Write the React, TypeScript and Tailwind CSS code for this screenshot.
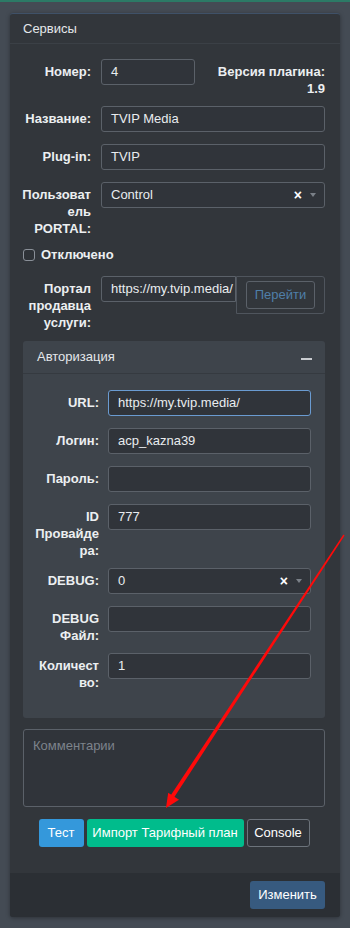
import React from 'react';

const font = { fontFamily: '"Liberation Sans", Arial, sans-serif' };

const inputCls =
  'h-[26px] w-full rounded-[3px] border border-[#5b6169] bg-[#30343a] px-[9px] text-[13px] text-[#e9ecef] outline-none';

const Row: React.FC<{ label: string; narrow?: boolean; mb?: string; children: React.ReactNode }> = ({
  label,
  narrow,
  mb = 'mb-[9px]',
  children,
}) => (
  <div className={`${mb} flex items-start`}>
    <div
      className={`${narrow ? '-ml-[4px] w-[67px] mr-[9px]' : '-ml-[4px] w-[72px] mr-[10px]'} shrink-0 break-words pt-[4px] text-right text-[13px] font-bold leading-[17px] text-[#eceff1]`}
    >
      {label}
    </div>
    <div className="min-h-[29px] min-w-0 flex-1">{children}</div>
  </div>
);

const Field: React.FC<{ value?: string; focus?: boolean }> = ({ value = '', focus }) => (
  <div className={`${inputCls} flex items-center ${focus ? 'border-[#6a9bd1]' : ''}`}>{value}</div>
);

const SelectBox: React.FC<{ value: string }> = ({ value }) => (
  <div className={`${inputCls} flex items-center`}>
    <span className="flex-1">{value}</span>
    <span className="mr-[8px] text-[14px] font-bold leading-none text-white">×</span>
    <span className="-mr-[1px] h-0 w-0 border-l-[3px] border-r-[3px] border-t-[4px] border-l-transparent border-r-transparent border-t-[#7a8088]" />
  </div>
);

const Arrow: React.FC = () => (
  <svg className="pointer-events-none absolute left-0 top-0" width="350" height="928" viewBox="0 0 350 928">
    <polygon points="344.6,535.4 343.4,534.6 170.3,795.9 173.7,798.1" fill="#ff0a0a" />
    <polygon points="166,808 168.2,792.8 179,799.8" fill="#ff0a0a" />
  </svg>
);

export default function App() {
  return (
    <div className="relative min-h-[928px] w-[350px] bg-[#444b54]" style={font}>
      <div className="h-[2px] bg-[#2c7a66]" />
      <div className="px-[10px] pt-[11px]">
        <div className="overflow-hidden rounded-[3px] border-t border-[#3f5168] bg-[#32363b] shadow-[0_1px_4px_rgba(0,0,0,0.35)]">
          <div className="flex h-[30px] items-center border-b border-[#3b4046] px-[13px] text-[13px] text-[#e4e7ea]">
            Сервисы
          </div>

          <div className="pb-[26px] pl-[13px] pr-[15px] pt-[15px]">
            <div className="mb-[9px] flex items-start">
              <div className="-ml-[4px] mr-[10px] w-[72px] shrink-0 pt-[4px] text-right text-[13px] font-bold leading-[17px] text-[#eceff1]">
                Номер:
              </div>
              <div className="w-[94px]">
                <Field value="4" />
              </div>
              <div className="flex-1 pt-[4px] text-right text-[13px] font-bold leading-[17px] text-[#eceff1]">
                Версия плагина:
                <br />
                1.9
              </div>
            </div>

            <Row label="Название:">
              <Field value="TVIP Media" />
            </Row>
            <Row label="Plug-in:">
              <Field value="TVIP" />
            </Row>
            <Row label="Пользователь PORTAL:">
              <SelectBox value="Control" />
            </Row>

            <label className="mb-[13px] flex h-[17px] items-center text-[13px] font-bold text-[#eceff1]">
              <span className="mr-[6px] h-[12px] w-[12px] rounded-[3px] border border-[#8a9098] bg-[#2e3237]" />
              Отключено
            </label>

            <Row label="Портал продавца услуги:" mb="mb-[10px]">
              <div className="flex items-start">
                <div className={`${inputCls} flex min-w-0 flex-1 items-center overflow-hidden whitespace-nowrap rounded-r-none`}>
                  https://my.tvip.media/
                </div>
                <div className="flex h-[38px] w-[89px] shrink-0 items-center justify-center rounded-r-[3px] border border-[#4f555d]">
                  <div className="flex h-[28px] w-[69px] items-center justify-center rounded-[3px] border border-[#5b6169] text-[13px] text-[#4f7fa9]">
                    Перейти
                  </div>
                </div>
              </div>
            </Row>

            <div className="mb-[11px] rounded-[3px] bg-[#3e444b]">
              <div className="flex h-[33px] items-center justify-between border-b border-[#353a40] pl-[14px] pr-[13px] text-[13px] text-[#e4e7ea]">
                <span>Авторизация</span>
                <span className="mt-[3px] h-[2px] w-[11px] bg-[#c9ccd0]" />
              </div>
              <div className="pb-[18px] pl-[13px] pr-[14px] pt-[16px]">
                <Row narrow label="URL:">
                  <Field value="https://my.tvip.media/" focus />
                </Row>
                <Row narrow label="Логин:">
                  <Field value="acp_kazna39" />
                </Row>
                <Row narrow label="Пароль:">
                  <Field />
                </Row>
                <Row narrow label="ID Провайдера:">
                  <Field value="777" />
                </Row>
                <Row narrow label="DEBUG:">
                  <SelectBox value="0" />
                </Row>
                <Row narrow label="DEBUG Файл:">
                  <Field />
                </Row>
                <Row narrow label="Количество:">
                  <Field value="1" />
                </Row>
              </div>
            </div>

            <div className="mb-[12px] h-[78px] rounded-[3px] border border-[#5b6169] bg-[#30343a] px-[9px] pt-[6px] text-[13px] text-[#7d838b]">
              Комментарии
            </div>

            <div className="flex justify-center gap-[3px] text-[13px]">
              <div className="flex h-[28px] w-[45px] items-center justify-center rounded-[3px] bg-[#3498db] text-white">Тест</div>
              <div className="flex h-[28px] w-[157px] items-center justify-center rounded-[3px] bg-[#00bc8c] text-white">
                Импорт Тарифный план
              </div>
              <div className="flex h-[28px] w-[63px] items-center justify-center rounded-[3px] border border-[#6c737b] bg-[#30343a] text-white">
                Console
              </div>
            </div>
          </div>

          <div className="flex justify-end bg-[#2b2f34] px-[15px] py-[8px]">
            <div className="flex h-[28px] w-[75px] items-center justify-center rounded-[3px] bg-[#375a7f] text-[13px] text-white">
              Изменить
            </div>
          </div>
        </div>
      </div>
      <Arrow />
    </div>
  );
}
